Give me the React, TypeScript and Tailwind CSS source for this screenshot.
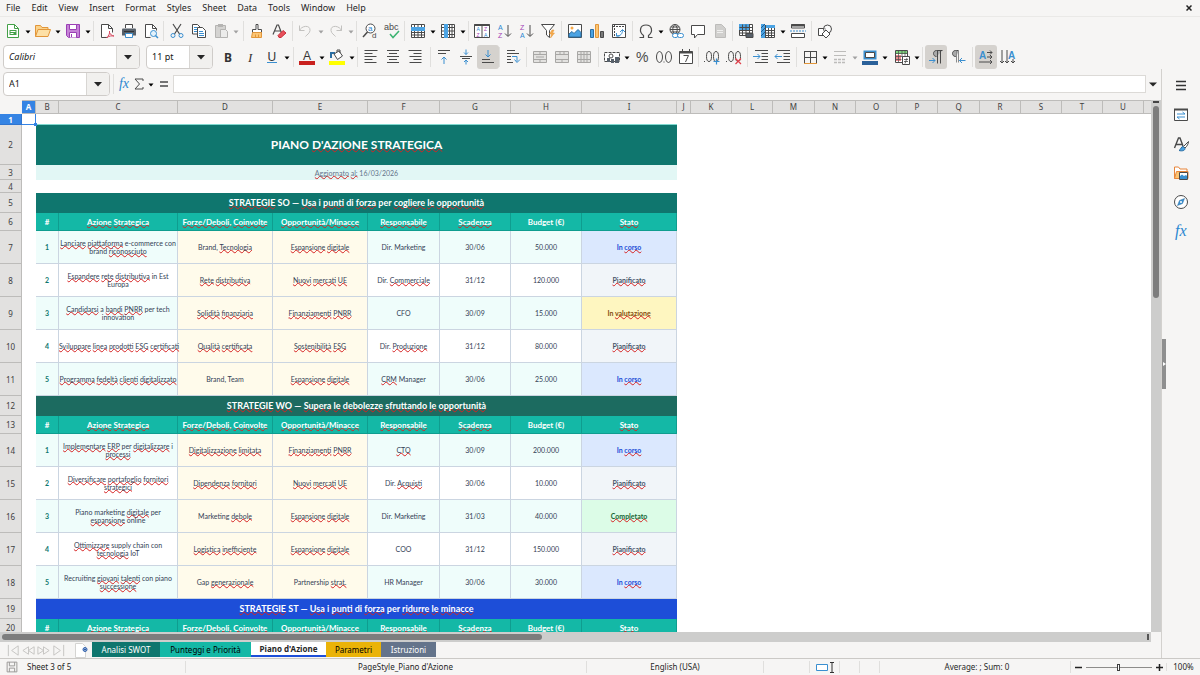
import { useState } from "react";
import type { ReactNode } from "react";
import clsx from "clsx";

const menus = ["File", "Edit", "View", "Insert", "Format", "Styles", "Sheet", "Data", "Tools", "Window", "Help"];

const columns = [
  { id: "A", width: "w-[14px]" },
  { id: "B", width: "w-[23px]" },
  { id: "C", width: "w-[119px]" },
  { id: "D", width: "w-[95px]" },
  { id: "E", width: "w-[95px]" },
  { id: "F", width: "w-[72px]" },
  { id: "G", width: "w-[71px]" },
  { id: "H", width: "w-[71px]" },
  { id: "I", width: "w-[95px]" },
  { id: "J", width: "w-[14px]" },
  { id: "K", width: "w-[41px]" },
  { id: "L", width: "w-[41px]" },
  { id: "M", width: "w-[42px]" },
  { id: "N", width: "w-[41px]" },
  { id: "O", width: "w-[41px]" },
  { id: "P", width: "w-[41px]" },
  { id: "Q", width: "w-[42px]" },
  { id: "R", width: "w-[41px]" },
  { id: "S", width: "w-[41px]" },
  { id: "T", width: "w-[41px]" },
  { id: "U", width: "w-[41px]" },
];

// A leading "~" flags a word that the spell checker underlines
const headings = [
  "#",
  "~Azione ~Strategica",
  "~Forze/Deboli, ~Coinvolte",
  "~Opportunità/Minacce",
  "~Responsabile",
  "~Scadenza",
  "Budget (€)",
  "~Stato",
];

type Status = "corso" | "pianificato" | "valutazione" | "completato";

const statuses: Record<Status, { label: string; style: string }> = {
  corso: { label: "In ~corso", style: "bg-[#dbe8fe] text-[#1d4ed8]" },
  pianificato: { label: "~Pianificato", style: "bg-[#f1f5f9] text-[#475569]" },
  valutazione: { label: "In ~valutazione", style: "bg-[#fef6c0] text-[#854d0e]" },
  completato: { label: "~Completato", style: "bg-[#dcfce7] text-[#166534]" },
};

type Action = [string, string, string, string, string, string, Status];

const strategySO: Action[] = [
  ["~Lanciare ~piattaforma e-commerce con\nbrand ~riconosciuto", "Brand, ~Tecnologia", "~Espansione ~digitale", "Dir. Marketing", "30/06", "50.000", "corso"],
  ["~Espandere ~rete ~distributiva in Est\nEuropa", "~Rete ~distributiva", "~Nuovi ~mercati ~UE", "Dir. ~Commerciale", "31/12", "120.000", "pianificato"],
  ["~Candidarsi a ~bandi ~PNRR per tech\ninnovation", "~Solidità ~finanziaria", "~Finanziamenti ~PNRR", "CFO", "30/09", "15.000", "valutazione"],
  ["~Sviluppare ~linea ~prodotti ~ESG ~certificati", "~Qualità ~certificata", "~Sostenibilità ~ESG", "Dir. ~Produzione", "31/12", "80.000", "pianificato"],
  ["~Programma ~fedeltà ~clienti ~digitalizzato", "Brand, Team", "~Espansione ~digitale", "~CRM Manager", "30/06", "25.000", "corso"],
];

const strategyWO: Action[] = [
  ["~Implementare ~ERP per ~digitalizzare i\n~processi", "~Digitalizzazione ~limitata", "~Finanziamenti ~PNRR", "~CTO", "30/09", "200.000", "corso"],
  ["~Diversificare ~portafoglio ~fornitori\n~strategici", "~Dipendenza ~fornitori", "~Nuovi ~mercati ~UE", "Dir. ~Acquisti", "30/06", "10.000", "pianificato"],
  ["Piano marketing ~digitale per\n~espansione online", "Marketing ~debole", "~Espansione ~digitale", "Dir. Marketing", "31/03", "40.000", "completato"],
  ["~Ottimizzare supply chain con\n~tecnologia IoT", "~Logistica ~inefficiente", "~Espansione ~digitale", "COO", "31/12", "150.000", "pianificato"],
  ["Recruiting ~giovani ~talenti con piano\n~successione", "Gap ~generazionale", "Partnership ~strat.", "HR Manager", "30/06", "30.000", "corso"],
];

const sheets = [
  { name: "Analisi SWOT", style: "w-[68px] bg-[#0f766e] text-white" },
  { name: "Punteggi e Priorità", style: "w-[91px] bg-[#14b8a6] text-black" },
  { name: "Piano d'Azione", style: "w-[75px] bg-white font-bold text-neutral-800 border-b-2 border-[#1d4ed8]" },
  { name: "Parametri", style: "w-[55px] bg-[#eab308] text-black" },
  { name: "Istruzioni", style: "w-[55px] bg-[#64748b] text-white" },
];

function Spell({ text }: { text: string }) {
  return (
    <>
      {text.split(/(\s)/).map((part, i) =>
        part.startsWith("~") ? (
          <span key={i} className="underline decoration-[#d62222] decoration-wavy decoration-1 -underline-offset-1 [text-decoration-skip-ink:none]">
            {part.slice(1)}
          </span>
        ) : (
          part
        )
      )}
    </>
  );
}

/* ---------- toolbar pieces ---------- */

function Glyph({ children, size = "size-4" }: { children: ReactNode; size?: string }) {
  return (
    <svg viewBox="0 0 16 16" className={clsx("overflow-visible", size)} fill="none" stroke="#4a4a4a" strokeWidth="1" aria-hidden="true">
      {children}
    </svg>
  );
}

function Tool({ label, active, children }: { label: string; active?: boolean; children: ReactNode }) {
  return (
    <button
      type="button"
      aria-label={label}
      title={label}
      className={clsx("flex h-6 w-[22px] shrink-0 items-center justify-center rounded-[3px]", active && "bg-[#d5d2ce]")}
    >
      <Glyph>{children}</Glyph>
    </button>
  );
}

function Arrow({ label, off }: { label: string; off?: boolean }) {
  return (
    <button type="button" aria-label={label} className="flex h-6 w-2 shrink-0 items-center justify-center">
      <svg viewBox="0 0 6 4" className={clsx("mt-0.5 h-1 w-1.5", off ? "fill-neutral-400" : "fill-black")}>
        <path d="M0.5 0.5h5L3 3.5z" />
      </svg>
    </button>
  );
}

function Group({ width, children }: { width: string; children: ReactNode }) {
  return (
    <div className={clsx("flex shrink-0 items-center pl-0.5", width)}>
      {children}
      <span className="ml-auto h-5 w-px bg-[#e0dfdd]" />
    </div>
  );
}

function Letters({ x, y, size = 8, color = "#4a4a4a", children }: { x: number; y: number; size?: number; color?: string; children: string }) {
  return (
    <text x={x} y={y} fontSize={size} fill={color} stroke="none" fontFamily="Liberation Sans, sans-serif">
      {children}
    </text>
  );
}

function StandardBar() {
  return (
    <div className="flex h-7 items-center overflow-hidden">
      <Group width="w-[94px]">
        <Tool label="New">
          <path d="M2.5 1.5h7l4 4v9h-11z" fill="#fff" stroke="#43a047" />
          <path d="M9.5 1.5v4h4" stroke="#43a047" />
          <path d="M4.5 7h7v5h-7z" fill="#43a047" stroke="none" />
          <path d="M5.5 8.5h5M5.5 10.5h3" stroke="#fff" />
        </Tool>
        <Arrow label="Templates" />
        <Tool label="Open">
          <path d="M.5 13.500v-11h5l1.500 2h6v3" fill="#fbd38b" stroke="#e2963a" />
          <path d="M.5 13.500l2.500-7h12.500l-2.500 7z" fill="#fde0a6" stroke="#e2963a" />
        </Tool>
        <Arrow label="Recent files" />
        <Tool label="Save">
          <path d="M1.500 1.500h13v13h-11l-2-2z" fill="#c583d6" stroke="#9b3fb5" />
          <path d="M4.500 1.500h7v5h-7z" fill="#fff" stroke="#9b3fb5" />
          <path d="M4.500 14.500v-5h7v5" fill="#fff" stroke="#9b3fb5" />
          <path d="M6.500 11v3" stroke="#9b3fb5" />
        </Tool>
        <Arrow label="Save as" />
      </Group>
      <Group width="w-[70px]">
        <Tool label="Export as PDF">
          <path d="M2.500 14.500v-13h7l4 4v4M2.500 14.500h6" fill="#fff" />
          <path d="M9.500 1.500v4h4" />
          <path d="M7.500 15c2-1.500 3.500-4.500 3-7M10.500 9.500c1 2 2.500 3.500 4.500 3.500-2-.5-5 0-7 1.500" stroke="#d9485f" />
        </Tool>
        <Tool label="Print">
          <path d="M4.500 5v-3.500h7v3.500" fill="#fff" />
          <path d="M1 6.500q0-1 1-1h12q1 0 1 1v6h-14z" fill="#57606a" stroke="none" />
          <path d="M3 8.500h10" stroke="#2f3338" />
          <path d="M4.500 10.500h7v4h-7z" fill="#fff" stroke="#3d8fce" />
        </Tool>
        <Tool label="Print preview">
          <path d="M2.500 14.500v-13h7l4 4v2M2.500 14.500h5" fill="#fff" />
          <path d="M9.500 1.500v4h4" />
          <circle cx="10.500" cy="10.500" r="3" fill="#e3f2fc" stroke="#3a8fd0" />
          <path d="M12.500 12.500l2.500 2.500" stroke="#3a8fd0" strokeWidth="1.500" />
        </Tool>
      </Group>
      <Group width="w-[80px]">
        <Tool label="Cut">
          <path d="M4 1l6.500 10M12 1l-6.500 10" strokeWidth="1.200" />
          <circle cx="4" cy="12.500" r="2" stroke="#3a8fd0" />
          <circle cx="12" cy="12.500" r="2" stroke="#3a8fd0" />
        </Tool>
        <Tool label="Copy">
          <path d="M1.500 1.500h5l2.500 2.500v7h-7.500z" fill="#fff" />
          <path d="M3 4.500h3M3 6.500h3M3 8.500h3" stroke="#3a8fd0" />
          <path d="M6.500 4.500h5l3 3v7h-8z" fill="#fff" />
          <path d="M8 8.500h4M8 10.500h5M8 12.500h5" stroke="#3a8fd0" />
        </Tool>
        <Tool label="Paste">
          <path d="M2.500 2.500h10v12h-10z" fill="#d4d3d1" stroke="#b5b4b2" />
          <path d="M5 1h5v3h-5z" fill="#b5b4b2" stroke="none" />
          <path d="M7.500 6.500h5l2 2v6h-7z" fill="#ececeb" stroke="#b5b4b2" />
        </Tool>
        <Arrow label="Paste special" off />
      </Group>
      <Group width="w-[49px]">
        <Tool label="Clone formatting">
          <path d="M7 1.500h2v5h3.500v3h-9v-3h3.500z" fill="#fff" />
          <path d="M3.500 9.500h9v5h-10z" fill="#fcc675" stroke="#e2963a" />
          <path d="M6.500 11.500v3M9.500 11.500v3" stroke="#e2963a" />
        </Tool>
        <Tool label="Clear direct formatting">
          <path d="M2 11.500l4-9.500h1.500l3 8M3.500 8h6" strokeWidth="1.200" />
          <path d="M7 12.500l5-5 3 2.500-5 4.500h-2z" fill="#e8505b" stroke="#c9303c" />
        </Tool>
      </Group>
      <Group width="w-[64px]">
        <Tool label="Undo">
          <path d="M1.500 2.500v5h5M1.500 7.500c2-5 11-6 10.500 0-.3 3-3 4-4.500 6" stroke="#c2c1bf" />
        </Tool>
        <Arrow label="Undo history" off />
        <Tool label="Redo">
          <path d="M13.500 2.500v5h-5M13.500 7.500c-2-5-11-6-10.500 0 .3 3 3 4 4.500 6" stroke="#c2c1bf" />
        </Tool>
        <Arrow label="Redo history" off />
      </Group>
      <Group width="w-[48px]">
        <Tool label="Find and replace">
          <circle cx="8.500" cy="5.500" r="4.500" fill="#fff" />
          <path d="M5.500 9l-4.500 5" strokeWidth="1.500" />
          <Letters x={6} y={8} size={8} color="#2b87d1">a</Letters>
          <Letters x={10} y={15} size={8}>d</Letters>
        </Tool>
        <Tool label="Spelling">
          <Letters x={0} y={7} size={9}>abc</Letters>
          <path d="M6 11l3 3.500 6-6.500" stroke="#3cb371" strokeWidth="1.500" />
        </Tool>
      </Group>
      <Group width="w-[64px]">
        <Tool label="Row">
          <path d="M1.500 1.500h13v13h-13z" fill="#fff" />
          <path d="M1.500 9.500h13M1.500 12h13M4.500 1.500v13M8 1.500v13M11.500 1.500v13" />
          <path d="M1 4h14v4h-14z" fill="#4ba3e3" stroke="none" />
        </Tool>
        <Arrow label="Row options" />
        <Tool label="Column">
          <path d="M1.500 1.500h13v13h-13z" fill="#fff" />
          <path d="M9.500 1.500v13M12 1.500v13M1.500 4.500h13M1.500 8h13M1.500 11.500h13" />
          <path d="M4 1h4v14h-4z" fill="#4ba3e3" stroke="none" />
        </Tool>
        <Arrow label="Column options" />
      </Group>
      <Group width="w-[93px]">
        <Tool label="Sort">
          <path d="M.5 1.500h15v13h-15zM8 1.500v13" fill="#fff" />
          <path d="M.5 2h15" strokeWidth="2" />
          <Letters x={2.500} y={8} size={5} color="#2b87d1">A</Letters>
          <Letters x={2.500} y={14} size={5} color="#a23fb5">Z</Letters>
          <Letters x={10} y={8} size={5} color="#a23fb5">Z</Letters>
          <Letters x={10} y={14} size={5} color="#2b87d1">A</Letters>
        </Tool>
        <Tool label="Sort ascending">
          <Letters x={2} y={7} size={7} color="#2b87d1">A</Letters>
          <Letters x={2} y={15} size={7} color="#a23fb5">Z</Letters>
          <path d="M12 2v11M9 10.500l3 3 3-3" />
        </Tool>
        <Tool label="Sort descending">
          <Letters x={2} y={7} size={7} color="#a23fb5">Z</Letters>
          <Letters x={2} y={15} size={7} color="#2b87d1">A</Letters>
          <path d="M12 2v11M9 10.500l3 3 3-3" />
        </Tool>
        <Tool label="AutoFilter">
          <path d="M1.500 1.500h13l-5 6v7l-3-2.500v-4.500z" fill="#fff" />
          <path d="M12 7l-2.500 4h2l-1 4 4-5h-2l1.500-3z" fill="#f6a94a" stroke="#e2963a" strokeWidth=".5" />
        </Tool>
      </Group>
      <Group width="w-[71px]">
        <Tool label="Image">
          <path d="M1.500 1.500h13v13h-13z" fill="#fff" />
          <circle cx="5" cy="5" r="1.500" fill="#f6a94a" stroke="none" />
          <path d="M2 14v-3l3-2.500 2 2 4-4 3 3v4.500z" fill="#4ba3e3" stroke="#2b6ea3" />
        </Tool>
        <Tool label="Chart">
          <path d="M1.500 6.500h3v8h-3z" fill="#4ba3e3" stroke="#2b6ea3" />
          <path d="M6.500 1.500h3v13h-3z" fill="#fcc675" stroke="#e2963a" />
          <path d="M11.500 8.500h3v6h-3z" fill="#7a7a7a" />
        </Tool>
        <Tool label="Pivot table">
          <path d="M1.500 1.500h13v13h-13z" fill="#fff" />
          <path d="M2 3.500h12M3.500 2v12" strokeDasharray="2 1" />
          <path d="M5.500 10v3h3M5.500 13c4 0 6-2 6-6M9 9l2.500-2.500 2.500 2.500" stroke="#3a8fd0" />
        </Tool>
      </Group>
      <Group width="w-[100px]">
        <Tool label="Special character">
          <path d="M1.500 14.500h4v-2c-5-4-3.500-10.500 2.500-10.500s7.500 6.500 2.500 10.500v2h4" strokeWidth="1.200" />
        </Tool>
        <Arrow label="Recent characters" />
        <Tool label="Hyperlink">
          <circle cx="7" cy="6.500" r="5" />
          <path d="M2 6.500h10M7 1.500c-3 3-3 7 0 10M7 1.500c3 3 3 7 0 10M3 4h8M3 9h8" />
          <rect x="4.500" y="10.500" width="5.500" height="4" rx="2" fill="#fff" stroke="#3a8fd0" />
          <rect x="9.500" y="10.500" width="6" height="4" rx="2" fill="#fff" stroke="#3a8fd0" />
        </Tool>
        <Tool label="Comment">
          <path d="M1.500 2.500h13v9h-7l-3 3.500v-3.500h-3z" fill="#fff" />
        </Tool>
        <Tool label="Headers and footers">
          <path d="M3.500 1.500h6l4 4v9h-10z" fill="#d0cfcd" stroke="#bdbcba" />
          <path d="M5 7.500h6M5 9.500h6" stroke="#efefee" />
        </Tool>
      </Group>
      <Group width="w-[79px]">
        <Tool label="Print area">
          <path d="M1.500 1.500h13v11h-13z" fill="#fff" />
          <path d="M1 1h10v6h-10z" fill="#4ba3e3" stroke="none" />
          <path d="M1.500 4.500h13M1.500 7.500h13M1.500 10h13M4.500 1.500v11M8 1.500v11M11.500 1.500v11" />
          <path d="M8 10.500h7v4h-7z" fill="#57606a" />
        </Tool>
        <Tool label="Freeze rows and columns">
          <path d="M1.500 2.500h13v12h-13z" fill="#fff" />
          <path d="M1 1h4v14h-4zM1 2h14v3h-14z" fill="#4ba3e3" stroke="none" />
          <path d="M5 7.500h10M5 10h10M5 12.500h10M5.500 2v13M8.500 5v10M11.500 5v10" />
          <path d="M1 5l4-4M1 9l4-4M1 13l4-4" stroke="#1f5f96" />
        </Tool>
        <Arrow label="Freeze options" />
        <Tool label="Split window">
          <path d="M1.500 5v-3.500h13v3.500M1.500 5h13" fill="#fff" />
          <path d="M1 2.500h14" strokeWidth="2" />
          <path d="M1.500 14.500v-4h13v4z" fill="#fff" />
          <path d="M0 8h16" stroke="#3a8fd0" strokeDasharray="2 1" />
        </Tool>
      </Group>
      <div className="flex pl-0.5">
        <Tool label="Show draw functions">
          <path d="M1.500 5.500h7v7h-7z" fill="#fff" />
          <circle cx="10.500" cy="6" r="4" fill="#fff" fillOpacity=".6" />
          <path d="M9 7l4 4-4 4-4-4z" fill="#fff" />
        </Tool>
      </div>
    </div>
  );
}

function DropButton({ label }: { label: string }) {
  return (
    <button type="button" aria-label={label} className="flex h-full w-[23px] items-center justify-center border-l border-[#d8d6d3] bg-[#f1f0ee]">
      <svg viewBox="0 0 8 5" className="h-[5px] w-2 fill-neutral-800">
        <path d="M0 0h8L4 4.500z" />
      </svg>
    </button>
  );
}

function Combo({ label, value, width, italic }: { label: string; value: string; width: string; italic?: boolean }) {
  const [text, setText] = useState(value);
  return (
    <div className={clsx("flex h-6 shrink-0 overflow-hidden rounded border border-[#cfccc9] bg-white", width)}>
      <input
        aria-label={label}
        value={text}
        onChange={(e) => setText(e.target.value)}
        className={clsx("w-0 min-w-0 flex-1 bg-transparent px-[5px] text-[9px] text-neutral-900 outline-none", italic && "italic")}
      />
      <DropButton label={`${label} list`} />
    </div>
  );
}

function Lines({ d, dim }: { d: string; dim?: boolean }) {
  return <path d={d} stroke={dim ? "#bdbcba" : "#4a4a4a"} />;
}

function FormattingBar() {
  return (
    <div className="flex h-6 items-center overflow-hidden">
      <div className="flex w-[215px] shrink-0 items-center gap-1.5 pl-[3px]">
        <Combo label="Font name" value="Calibri" width="w-[137px]" italic />
        <Combo label="Font size" value="11 pt" width="w-[67px]" />
        <span className="ml-auto h-5 w-px bg-[#e0dfdd]" />
      </div>
      <Group width="w-[79px]">
        <Tool label="Bold">
          <text x="4" y="12.500" fontSize="12" fontWeight="bold" fill="#333" stroke="none" fontFamily="Noto Sans, sans-serif">B</text>
        </Tool>
        <Tool label="Italic">
          <text x="6" y="12.500" fontSize="13" fontStyle="italic" fill="#333" stroke="none" fontFamily="Liberation Serif, serif">I</text>
        </Tool>
        <Tool label="Underline">
          <Letters x={3.500} y={11.500} size={12} color="#333">U</Letters>
          <path d="M3 13.500h10" stroke="#3a8fd0" />
        </Tool>
        <Arrow label="Underline style" />
      </Group>
      <Group width="w-[64px]">
        <Tool label="Font color">
          <Letters x={4} y={10.500} size={12} color="#333">A</Letters>
          <path d="M0 12h16v4h-16z" fill="#c9211e" stroke="none" />
        </Tool>
        <Arrow label="Font color options" />
        <Tool label="Background color">
          <path d="M2 9v-5h4" stroke="#2b6ea3" strokeWidth="2" />
          <path d="M5 5l5-3 3.500 5-5 3.500zM8 3v-2h3v3" fill="#fff" />
          <path d="M0 12h16v4h-16z" fill="#ffff00" stroke="none" />
        </Tool>
        <Arrow label="Background color options" />
      </Group>
      <Group width="w-[73px]">
        <Tool label="Align left"><Lines d="M1.500 1.500h13M1.500 4.500h8M1.500 7.500h12M1.500 10.500h8M1.500 13.500h12" /></Tool>
        <Tool label="Center"><Lines d="M2 1.500h12M4 4.500h8M2 7.500h12M4 10.500h8M2 13.500h12" /></Tool>
        <Tool label="Align right"><Lines d="M1.500 1.500h13M6.500 4.500h8M2.500 7.500h12M6.500 10.500h8M2.500 13.500h12" /></Tool>
      </Group>
      <Group width="w-[69px]">
        <Tool label="Align top">
          <Lines d="M2 1.500h12M2 4.500h8" />
          <path d="M8 15v-7M5.500 10.500l2.500-2.500 2.500 2.500" stroke="#3a8fd0" />
        </Tool>
        <Tool label="Center vertically">
          <Lines d="M2 7.500h12M4 9.500h8" />
          <path d="M8 .5v5M6 3.500l2 2 2-2M8 15.500v-4.500M6 13l2-2 2 2" stroke="#3a8fd0" />
        </Tool>
        <Tool label="Align bottom" active>
          <Lines d="M2 10.500h8M2 13.500h12" />
          <path d="M8 1v7M5.500 5.500l2.500 2.500 2.500-2.500" stroke="#3a8fd0" />
        </Tool>
      </Group>
      <Group width="w-[27px]">
        <Tool label="Wrap text">
          <Lines d="M2 1.500h8M2 4.500h12M2 7.500h4M2 10.500h4M2 13.500h6" />
          <path d="M7 7.500h5v5M9.500 10.500l2.500 3 3-3" stroke="#3a8fd0" />
        </Tool>
      </Group>
      <Group width="w-[72px]">
        <Tool label="Merge and center">
          <path d="M1.500 2.500h13v11h-13z" fill="#e3e2e0" stroke="#a8a7a5" />
          <path d="M1.500 5.500h13M1.500 10.500h13M8 2.500v3M8 10.500v3M4 8h8" stroke="#a8a7a5" />
        </Tool>
        <Tool label="Merge cells">
          <path d="M1.500 2.500h13v11h-13z" fill="#e3e2e0" stroke="#a8a7a5" />
          <path d="M1.500 5.500h13M1.500 10.500h13M6 2.500v3M10 2.500v3M8 10.500v3" stroke="#a8a7a5" />
        </Tool>
        <Tool label="Unmerge cells">
          <path d="M1.500 2.500h13v11h-13z" fill="#e3e2e0" stroke="#a8a7a5" />
          <path d="M1.500 5.500h13M1.500 10.500h13M5 2.500v11M8 2.500v11M11 2.500v11" stroke="#a8a7a5" />
        </Tool>
      </Group>
      <Group width="w-[100px]">
        <Tool label="Currency">
          <path d="M.5 3.500h15v9h-15z" fill="#fff" strokeDasharray="3 1" />
          <circle cx="7" cy="7" r="2" />
          <path d="M3 9h3v4h-3zM7 10h3v4h-3zM11 8h4v6h-4z" fill="#57606a" stroke="none" />
        </Tool>
        <Arrow label="Currency options" />
        <Tool label="Percent">
          <Letters x={2} y={13} size={14}>%</Letters>
        </Tool>
        <Tool label="Number">
          <ellipse cx="3.500" cy="8" rx="3" ry="5.500" />
          <ellipse cx="12.500" cy="8" rx="3" ry="5.500" />
          <path d="M7.500 13h1" />
        </Tool>
        <Tool label="Date">
          <path d="M1.500 2.500h13v12h-13z" fill="#fff" />
          <path d="M1.500 3.500h13" strokeWidth="2" />
          <path d="M4.500 0v3M11.500 0v3M5.500 6.500h5l-3 6.500" />
        </Tool>
      </Group>
      <Group width="w-[49px]">
        <Tool label="Add decimal place">
          <path d="M0 12.500h1" />
          <ellipse cx="5" cy="7.500" rx="2.500" ry="5" />
          <ellipse cx="12" cy="7.500" rx="2.500" ry="5" />
          <path d="M12.500 9.500v6M9.500 12.500h6" stroke="#3a8fd0" strokeWidth="1.200" />
        </Tool>
        <Tool label="Delete decimal place">
          <path d="M0 12.500h1" />
          <ellipse cx="5" cy="7.500" rx="2.500" ry="5" />
          <ellipse cx="12" cy="7.500" rx="2.500" ry="5" />
          <path d="M9.500 9.500l5.500 5.500M15 9.500l-5.500 5.500" stroke="#e0414c" strokeWidth="1.200" />
        </Tool>
      </Group>
      <Group width="w-[49px]">
        <Tool label="Increase indent">
          <Lines d="M2 1.500h13M8.500 4.500h6.500M8.500 7.500h6.500M8.500 10.500h6.500M2 13.500h13" />
          <path d="M0 7.500h7M4.500 5l2.500 2.500-2.500 2.500" stroke="#3a8fd0" />
        </Tool>
        <Tool label="Decrease indent">
          <Lines d="M2 1.500h13M8.500 4.500h6.500M8.500 7.500h6.500M8.500 10.500h6.500M2 13.500h13" />
          <path d="M0 7.500h7M2.500 5l-2.500 2.500 2.500 2.500" stroke="#3a8fd0" />
        </Tool>
      </Group>
      <Group width="w-[92px]">
        <Tool label="Borders">
          <path d="M2.500 2v12M14.500 2v12M8.500 2v12M2.500 2.500h12M2.500 8.500h12" />
          <path d="M2 14.500h13" stroke="#e2963a" />
        </Tool>
        <Arrow label="Border options" />
        <Tool label="Border style">
          <Lines d="M2 2.500h12M2 6.500h12" dim />
          <path d="M2 10.500h12M2 13.500h12" stroke="#bdbcba" strokeWidth="1.500" strokeDasharray="3 1" />
        </Tool>
        <Arrow label="Border style options" off />
        <Tool label="Border color">
          <path d="M2.500 2.500h11v7h-11z" fill="#fff" stroke="#3a8fd0" strokeWidth="2" />
          <path d="M3.500 3.500h9v5h-9z" />
          <path d="M0 12h16v4h-16z" fill="#2a6099" stroke="none" />
        </Tool>
        <Arrow label="Border color options" />
      </Group>
      <Group width="w-[34px]">
        <Tool label="Conditional formatting">
          <path d="M1.500 1.500h12v12h-12z" fill="#fff" />
          <path d="M2 2h11v3h-11z" fill="#7ed67e" stroke="none" />
          <path d="M2 6h5v6h-5z" fill="#f08a8f" stroke="none" />
          <path d="M1.500 4.500h12M1.500 7.500h12M1.500 10.500h6M4.500 1.500v12M8 1.500v6M11 1.500v6" strokeWidth=".7" />
          <path d="M8.500 7.500h7v8h-7z" fill="#fff" />
          <path d="M10 10.500h4M10 12.500h4M13 9l-2 5.500" strokeWidth=".8" />
        </Tool>
        <Arrow label="Conditional formatting options" />
      </Group>
      <Group width="w-[50px]">
        <Tool label="Left to right" active>
          <path d="M14.500 1.500h-6c-4 0-4 6 0 6" fill="#aaa" />
          <path d="M9.500 1.500v13M12.500 1.500v13" />
          <path d="M1 11.500h6M4.500 9l2.500 2.500-2.500 2.500" stroke="#3a8fd0" />
        </Tool>
        <Tool label="Right to left">
          <path d="M8.500 1.500h-3c-4 0-4 6 0 6h1" fill="#aaa" />
          <path d="M6.500 1.500v12M8.500 1.500v12" stroke="#8a8a8a" />
          <path d="M15.500 11.500h-6M12 9l-2.500 2.500 2.500 2.500" stroke="#3a8fd0" />
        </Tool>
      </Group>
      <div className="flex pl-0.5">
        <Tool label="Text direction left to right" active>
          <text x="1" y="9.500" fontSize="10" fontWeight="bold" fill="#3a8fd0" stroke="none" fontFamily="Liberation Sans, sans-serif">A</text>
          <Lines d="M9 3.500h5M12 1.500l2 2-2 2M9 8h5M12 6l2 2-2 2M1 13h13M12 11l2 2-2 2" />
        </Tool>
        <Tool label="Text direction top to bottom">
          <text x="8" y="9.500" fontSize="10" fontWeight="bold" fill="#3a8fd0" stroke="none" fontFamily="Liberation Sans, sans-serif">A</text>
          <Lines d="M2 1v13M0 12l2 2 2-2M7 1v13M5 12l2 2 2-2M13 10v4M11 12l2 2 2-2" />
        </Tool>
      </div>
    </div>
  );
}

function FormulaBar() {
  const [formula, setFormula] = useState("");
  return (
    <div className="mb-px flex h-[30px] items-center pl-[3px]">
      <Combo label="Name box" value="A1" width="w-[107px]" />
      <span className="ml-[3px] h-5 w-px bg-[#e0dfdd]" />
      <button type="button" aria-label="Function wizard" className="ml-1 w-3 font-['Liberation_Serif',serif] text-[14px] leading-4 text-[#2b87d1] italic">
        fx
      </button>
      <button type="button" aria-label="Select function" className="ml-[3px] flex w-3 justify-center">
        <svg viewBox="0 0 10 12" className="h-3 w-2.5" fill="none" stroke="#4a4a4a">
          <path d="M9 3V1H1l4.500 5L1 11h8V9" />
        </svg>
      </button>
      <span className="ml-0.5 flex">
        <Arrow label="Function list" />
      </span>
      <button type="button" aria-label="Formula" className="ml-1 flex w-2.5 justify-center">
        <svg viewBox="0 0 8 6" className="h-1.5 w-2" stroke="#4a4a4a" strokeWidth="1.500">
          <path d="M0 1h8M0 5h8" />
        </svg>
      </button>
      <input
        aria-label="Input line"
        value={formula}
        onChange={(e) => setFormula(e.target.value)}
        className="ml-1 h-[18px] min-w-0 flex-1 border border-[#dcdad7] bg-white px-1 text-[9px] outline-none"
      />
      <button type="button" aria-label="Expand formula bar" className="mr-0.5 flex h-[18px] w-[13px] items-center justify-center">
        <svg viewBox="0 0 8 5" className="h-[5px] w-2 fill-neutral-800">
          <path d="M0 .5h8L4 4.500z" />
        </svg>
      </button>
    </div>
  );
}

/* ---------- sheet ---------- */

function RowHead({ n, selected }: { n: number; selected?: boolean }) {
  return (
    <th
      scope="row"
      className={clsx(
        "overflow-hidden border-r border-b text-center text-[8px] leading-[9px]",
        selected ? "border-[#2f74cf] bg-[#3584e4] font-bold text-white" : "border-[#bdbcba] bg-[#e2e1e0] font-normal text-neutral-700"
      )}
    >
      {n}
    </th>
  );
}

function SectionRow({ n, title, color }: { n: number; title: string; color: string }) {
  return (
    <tr className="h-5">
      <RowHead n={n} />
      <td />
      <td colSpan={8} className={clsx("text-center font-['Lato',sans-serif] text-[9px] leading-[12px] font-bold text-white", color)}>
        <Spell text={title} />
      </td>
    </tr>
  );
}

function HeadingRow({ n }: { n: number }) {
  return (
    <tr className="h-[18px]">
      <RowHead n={n} />
      <td />
      {headings.map((h) => (
        <th
          key={h}
          scope="col"
          className="border-r border-b border-[#0f9d8f] bg-[#14b8a6] text-center font-['Lato',sans-serif] text-[8px] leading-[10px] font-bold whitespace-nowrap text-white"
        >
          <Spell text={h} />
        </th>
      ))}
    </tr>
  );
}

function ActionRows({ start, actions }: { start: number; actions: Action[] }) {
  return actions.map(([action, swot, factor, owner, due, budget, status], i) => {
    const shade = i % 2 === 0 ? "bg-[#effdfb]" : "bg-white";
    const cell = "border-r border-b border-[#cbd5e1] text-center font-['Lato',sans-serif] text-[7px] leading-[8px] whitespace-pre text-[#334155]";
    return (
      <tr key={action} className="h-[33px]">
        <RowHead n={start + i} />
        <td />
        <td className={clsx(cell, shade, "font-bold text-[#0f766e]!")}>{i + 1}</td>
        <td className={clsx(cell, shade)}><Spell text={action} /></td>
        <td className={clsx(cell, "bg-[#fffbeb]")}><Spell text={swot} /></td>
        <td className={clsx(cell, "bg-[#fffbeb]")}><Spell text={factor} /></td>
        <td className={clsx(cell, shade)}><Spell text={owner} /></td>
        <td className={clsx(cell, shade)}>{due}</td>
        <td className={clsx(cell, shade)}>{budget}</td>
        <td className="border-r border-b border-[#cbd5e1] p-0">
          <div className={clsx("flex h-8 items-center justify-center font-['Lato',sans-serif] text-[7px] leading-[8px] font-bold whitespace-pre", statuses[status].style)}>
            <span><Spell text={statuses[status].label} /></span>
          </div>
        </td>
      </tr>
    );
  });
}

function Grid() {
  return (
    <div className="min-h-0 min-w-0 flex-1 overflow-hidden bg-white">
      <table className="w-full table-fixed border-separate border-spacing-0 [&_td]:p-0 [&_th]:p-0">
        <colgroup>
          <col className="w-[22px]" />
          {columns.map((c) => (
            <col key={c.id} className={c.width} />
          ))}
          <col />
        </colgroup>
        <thead>
          <tr className="h-[14px]">
            <td className="bg-[#f6f5f4]" />
            {columns.map((c) => (
              <th
                key={c.id}
                scope="col"
                className={clsx(
                  "overflow-hidden border-t border-r border-b border-[#bdbcba] text-center text-[8px] leading-[10px]",
                  c.id === "A" ? "bg-[#3584e4] font-bold text-white" : "bg-[#e2e1e0] font-normal text-neutral-700"
                )}
              >
                {c.id}
              </th>
            ))}
            <td className="border-t border-b border-[#bdbcba] bg-[#e2e1e0]" />
          </tr>
        </thead>
        <tbody>
          <tr className="h-[11px]">
            <RowHead n={1} selected />
            <td className="relative border-r border-b border-[#3584e4]">
              <span className="absolute -right-0.5 -bottom-0.5 size-[3px] bg-[#3584e4]" />
            </td>
            <td colSpan={8} className="border-b border-[#7fd8cf]" />
          </tr>
          <tr className="h-10">
            <RowHead n={2} />
            <td />
            <td colSpan={8} className="bg-[#0f766e] text-center font-['Lato',sans-serif] text-[12px] leading-[16px] font-bold text-white">
              <Spell text="PIANO ~D'AZIONE ~STRATEGICA" />
            </td>
          </tr>
          <tr className="h-[15px]">
            <RowHead n={3} />
            <td />
            <td colSpan={8} className="bg-[#e2f7f5] text-center font-['Lato',sans-serif] text-[7px] leading-[8px] text-[#64748b]">
              <Spell text="~Aggiornato ~al: 16/03/2026" />
            </td>
          </tr>
          <tr className="h-[13px]">
            <RowHead n={4} />
          </tr>
          <SectionRow n={5} title="~STRATEGIE SO — ~Usa i ~punti di ~forza per ~cogliere ~le ~opportunità" color="bg-[#0f766e]" />
          <HeadingRow n={6} />
          <ActionRows start={7} actions={strategySO} />
          <SectionRow n={12} title="~STRATEGIE ~WO — ~Supera ~le ~debolezze ~sfruttando ~le ~opportunità" color="bg-[#1c6b60]" />
          <HeadingRow n={13} />
          <ActionRows start={14} actions={strategyWO} />
          <SectionRow n={19} title="~STRATEGIE ST — ~Usa i ~punti di ~forza per ~ridurre ~le ~minacce" color="bg-[#1d4ed8]" />
          <HeadingRow n={20} />
        </tbody>
      </table>
    </div>
  );
}

function SheetTabs() {
  const [current, setCurrent] = useState("Piano d'Azione");
  return (
    <div className="flex h-4 shrink-0 items-start">
      <div className="flex w-[70px] shrink-0 pl-1.5">
        {["M2.500 2v12M13 3l-7 5 7 5z", "M14 4l-6 4 6 4zM8 4l-6 4 6 4z", "M2 4l6 4-6 4zM8 4l6 4-6 4z", "M13.500 2v12M3 3l7 5-7 5z"].map((d, i) => (
          <button key={d} type="button" aria-label={["First sheet", "Previous sheet", "Next sheet", "Last sheet"][i]} className="flex h-4 w-[15px] items-center justify-center">
            <svg viewBox="0 0 16 16" className="size-[15px]" fill="none" stroke="#c4c3c1">
              <path d={d} />
            </svg>
          </button>
        ))}
      </div>
      <button type="button" aria-label="Add sheet" className="flex h-4 w-[22px] shrink-0 items-center justify-center">
        <svg viewBox="0 0 14 16" className="h-4 w-3.5" fill="none" stroke="#d5d4d2">
          <path d="M1.500 1.500h7l3 3v11h-10z" fill="#fff" />
          <circle cx="11" cy="7.500" r="2" fill="#fff" stroke="#2a5caa" />
          <path d="M11 6v3M9.500 7.500h3" stroke="#2a5caa" />
        </svg>
      </button>
      <div role="tablist" className="flex">
        {sheets.map((s) => (
          <button
            key={s.name}
            type="button"
            role="tab"
            aria-selected={s.name === current}
            onClick={() => setCurrent(s.name)}
            className={clsx("h-[15px] text-center text-[8px] leading-[13px] whitespace-nowrap", s.style)}
          >
            {s.name}
          </button>
        ))}
      </div>
    </div>
  );
}

function Sidebar() {
  return (
    <aside className="flex w-[39px] shrink-0 border-l border-[#d3d1ce]">
      <div className="flex w-1 items-center">
        <button type="button" aria-label="Hide sidebar" className="flex h-[50px] w-1 items-center justify-center bg-[#8f8f8f]">
          <svg viewBox="0 0 3 4" className="h-1 w-[3px] fill-white">
            <path d="M0 0l3 2-3 2z" />
          </svg>
        </button>
      </div>
      <nav className="flex flex-1 flex-col items-center pt-0.5 pr-1">
        {[
          {
            label: "Sidebar settings",
            icon: <path d="M3 3.500h10M3 7.500h10M3 11.500h10" stroke="#333" strokeWidth="1.500" />,
          },
          {
            label: "Properties",
            icon: (
              <>
                <path d="M1.500 2.500h13v11h-13z" fill="#fff" />
                <path d="M1 2.500h14" strokeWidth="2" />
                <path d="M4 7h8M9.500 5l2.500 2M4 10h8M4 10l2.500 2" stroke="#3a8fd0" />
              </>
            ),
          },
          {
            label: "Styles",
            icon: (
              <>
                <path d="M1.500 12l4-10h1.500l3 8M3 8.500h6" strokeWidth="1.400" />
                <path d="M15.500 5.500l-5 5 1.500 1.500c2-1.500 3.500-4.500 3.500-6.500z" fill="#fff" />
                <path d="M10 10.500c-2 0-2 3-4 4 3 .8 6 .2 6-2z" fill="#4ba3e3" stroke="#2b6ea3" />
              </>
            ),
          },
          {
            label: "Gallery",
            icon: (
              <>
                <path d="M1.500 13.500v-11.500h4l1.500 2h7v3" fill="#fff" stroke="#e8853a" />
                <path d="M1.500 13.500l2-7h11.500v7z" fill="#fcc675" stroke="#e8853a" />
                <path d="M6.500 7.500h8v7h-8z" fill="#fff" />
                <path d="M7 14v-3l2-1.500 2 1.500 2-1 1 1v3z" fill="#3a8fd0" stroke="none" />
              </>
            ),
          },
          {
            label: "Navigator",
            icon: (
              <>
                <circle cx="8" cy="8" r="6.500" fill="#fff" />
                <path d="M11.500 4.500l-2 5-5 2 2-5z" fill="#3a8fd0" stroke="#2b6ea3" strokeWidth=".5" />
                <circle cx="8" cy="8" r="1" fill="#fff" stroke="none" />
              </>
            ),
          },
          {
            label: "Functions",
            icon: (
              <text x="2" y="12.500" fontSize="16" fontStyle="italic" fill="#2b87d1" stroke="none" fontFamily="Liberation Serif, serif">
                fx
              </text>
            ),
          },
        ].map(({ label, icon }) => (
          <button key={label} type="button" aria-label={label} title={label} className="flex h-[29px] w-7 items-center justify-center">
            <Glyph>{icon}</Glyph>
          </button>
        ))}
      </nav>
    </aside>
  );
}

function StatusBar() {
  const [zoom, setZoom] = useState(100);
  const divider = "border-r border-[#e0dfdd]";
  return (
    <footer className="flex h-[17px] shrink-0 items-center border-t border-[#cbc9c6] text-[8px] leading-3 text-neutral-800">
      <div className="flex w-6 justify-center">
        <Glyph size="size-3">
          <path d="M1.500 1.500h13v13h-13zM4.500 1.500v5h7v-5M4.500 14.500v-5h7v5" stroke="#9a9997" strokeWidth="1.300" />
        </Glyph>
      </div>
      <div className={clsx("w-[162px] pl-[3px]", divider)}>Sheet 3 of 5</div>
      <div className="flex-1 pl-[172px]">PageStyle_Piano d'Azione</div>
      <div className={clsx("w-[178px] border-l border-[#e0dfdd] text-center", divider)}>English (USA)</div>
      <div className={clsx("h-3 w-[46px]", divider)} />
      <div className={clsx("flex w-[30px] items-center gap-0.5 pl-1.5", divider)}>
        <svg viewBox="0 0 20 12" className="h-3 w-5" fill="none">
          <path d="M.5 3.500h11v6h-11z" fill="#fff" stroke="#3a8fd0" />
          <path d="M14 1.500h4M16 1.500v10M14 11.500h4" stroke="#333" />
        </svg>
      </div>
      <div className={clsx("h-3 w-5", divider)} />
      <div className={clsx("h-3 w-5", divider)} />
      <div className={clsx("w-[191px] pl-1 text-center", divider)}>Average: ; Sum: 0</div>
      <div className={clsx("flex w-24 items-center justify-center gap-1", divider)}>
        <button type="button" aria-label="Zoom out" onClick={() => setZoom(zoom - 5)}>
          <svg viewBox="0 0 7 7" className="size-[7px]" stroke="#222" strokeWidth="1.500"><path d="M0 3.500h7" /></svg>
        </button>
        <input
          type="range"
          aria-label="Zoom"
          min={0}
          max={200}
          value={zoom}
          onChange={(e) => setZoom(Number(e.target.value))}
          className="h-2 w-[66px] appearance-none bg-[linear-gradient(#8d8c8a,#8d8c8a)] bg-[length:100%_1px] bg-center bg-no-repeat [&::-webkit-slider-thumb]:h-[7px] [&::-webkit-slider-thumb]:w-[3px] [&::-webkit-slider-thumb]:appearance-none [&::-webkit-slider-thumb]:border [&::-webkit-slider-thumb]:border-neutral-700 [&::-webkit-slider-thumb]:bg-white"
        />
        <button type="button" aria-label="Zoom in" onClick={() => setZoom(zoom + 5)}>
          <svg viewBox="0 0 7 7" className="size-[7px]" stroke="#222" strokeWidth="1.500"><path d="M0 3.500h7M3.500 0v7" /></svg>
        </button>
      </div>
      <div className="w-[33px] text-center">{zoom}%</div>
    </footer>
  );
}

export default function App() {
  return (
    <div className="flex h-screen flex-col overflow-hidden bg-[#f6f5f4] font-['Noto_Sans',sans-serif] text-neutral-800">
      <header className="shrink-0">
        <nav className="flex h-[17px] items-center gap-[11px] border-b border-[#eae9e7] pr-2 pl-1.5 text-[9px] leading-3">
          {menus.map((m) => (
            <button key={m} type="button">{m}</button>
          ))}
          <button type="button" aria-label="Close document" className="ml-auto">
            <svg viewBox="0 0 6 6" className="size-1.5" stroke="#222" strokeWidth="1.500"><path d="M.5 .5l5 5M5.500 .5l-5 5" /></svg>
          </button>
        </nav>
        <StandardBar />
        <FormattingBar />
      </header>
      <div className="flex min-h-0 flex-1">
        <main className="flex min-w-0 flex-1 flex-col">
          <FormulaBar />
          <div className="flex min-h-0 flex-1">
            <div className="flex min-w-0 flex-1 flex-col">
              <Grid />
              <div className="flex h-[10px] shrink-0 items-center bg-[#cdcdcc] pl-0.5">
                <div className="h-1.5 w-[47%] rounded-full bg-[#7d7d7d]" />
                <span className="mr-0.5 ml-auto h-1.5 w-0.5 bg-[#555]" />
              </div>
            </div>
            <div className="mb-[10px] flex w-[10px] shrink-0 flex-col items-center bg-[#cdcdcc]">
              <span className="mt-px h-0.5 w-1.5 bg-[#444]" />
              <div className="mt-[3px] h-[36%] w-1.5 rounded-full bg-[#7d7d7d]" />
            </div>
          </div>
          <SheetTabs />
        </main>
        <Sidebar />
      </div>
      <StatusBar />
    </div>
  );
}
